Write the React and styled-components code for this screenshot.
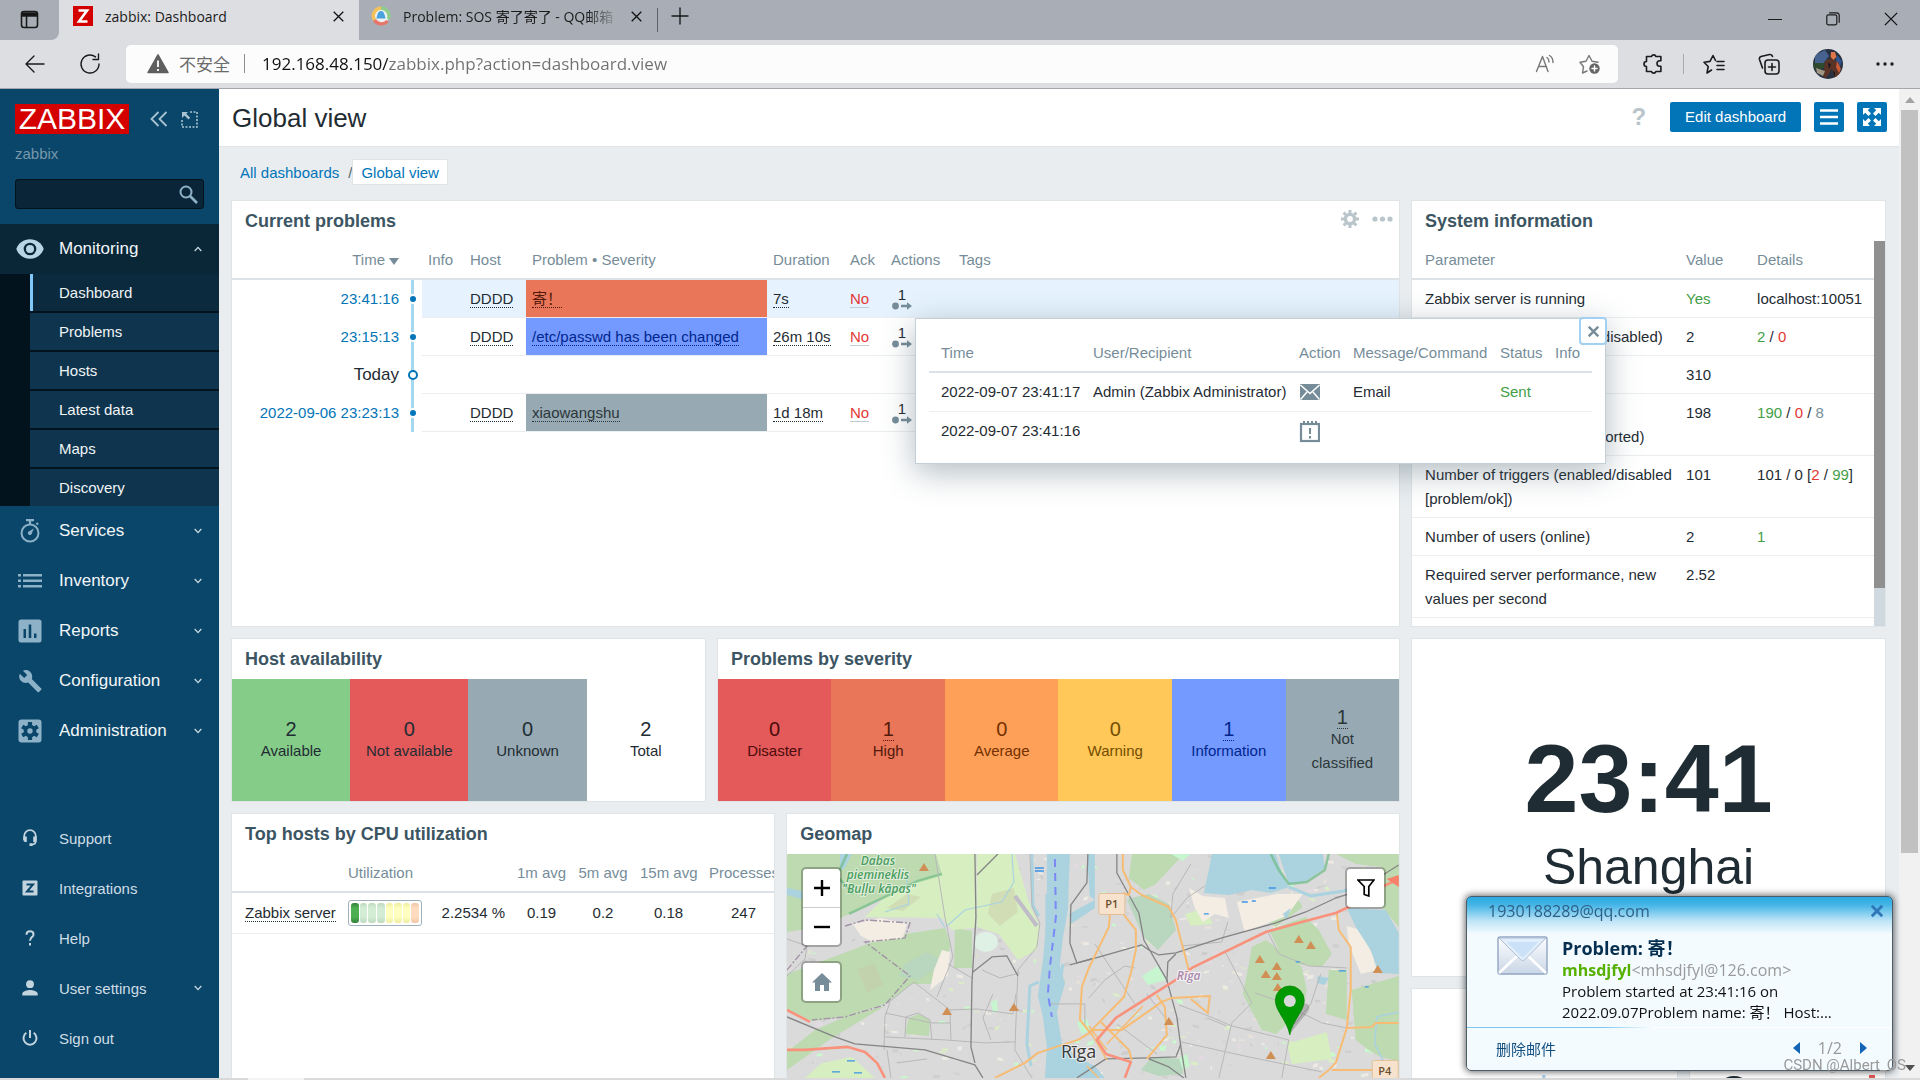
import React from "react";
import styled, { createGlobalStyle, css } from "styled-components";

const sans = '"Liberation Sans", Arial, "Noto Sans CJK SC", sans-serif';
const ui = '"Open Sans", "Noto Sans CJK SC", sans-serif';
const cjk = '"Noto Sans CJK SC", "Open Sans", sans-serif';

const GlobalStyle = createGlobalStyle`
  * { box-sizing: border-box; }
  html, body, #root { height: 100%; }
  body { margin: 0; background: #dcdcdc; font-family: ${sans}; font-size: 15px; color: #1f2c33; overflow: hidden; }
  button { font: inherit; color: inherit; background: none; border: 0; padding: 0; margin: 0; cursor: pointer; }
  a { color: inherit; text-decoration: none; }
  svg { display: block; flex: none; }
  h1, h2, h3, p, ul { margin: 0; padding: 0; }
  ul { list-style: none; }
`;

/* ---------- browser window ---------- */

const Window = styled.div`
  height: 100vh;
  display: flex;
  flex-direction: column;
`;

const TabStrip = styled.div`
  height: 40px;
  flex: none;
  display: flex;
  align-items: stretch;
  background: #a9aeb6;
  font-family: ${ui};
  font-size: 14px;
  color: #111;
`;

const TabActions = styled.button`
  width: 59px;
  padding: 10px 0 0 20px;
  display: flex;
  align-items: flex-start;
  border-bottom-right-radius: 8px;
  background: #a9aeb6;
`;

const StripStart = styled.div`
  background: #dddee2;
  display: flex;
`;

const BrowserTab = styled.div`
  display: flex;
  align-items: center;
  gap: 12px;
  width: ${(p) => (p.$active ? 300 : 298)}px;
  padding: 0 15px 8px ${(p) => (p.$active ? 14 : 12)}px;
  border-radius: 8px 8px 0 0;
  background: ${(p) => (p.$active ? "#dddee2" : "#a9aeb6")};
  height: 40px;
`;

const TabTitle = styled.span`
  flex: 1;
  min-width: 0;
  overflow: hidden;
  white-space: nowrap;
  color: #1b1b1b;
  ${(p) => p.$fade && css`mask-image: linear-gradient(90deg, #000 85%, transparent);`}
`;

const NewTab = styled.button`
  display: flex;
  align-items: center;
  padding: 0 12px 8px 13px;
`;

const StripDivider = styled.span`
  width: 1px;
  height: 24px;
  margin-top: 8px;
  background: #5f6268;
`;

const WindowButtons = styled.div`
  margin-left: auto;
  display: flex;
  gap: 44px;
  padding: 12px 22px 0 0;
  align-items: flex-start;
`;

const Toolbar = styled.div`
  height: 49px;
  flex: none;
  display: flex;
  align-items: center;
  gap: 34px;
  padding: 0 26px 1px 24px;
  background: #dddee2;
  border-bottom: 1px solid #a3a6ab;
`;

const AddressBar = styled.label`
  flex: 1;
  height: 38px;
  margin-left: -9px;
  margin-right: -10px;
  display: flex;
  align-items: center;
  gap: 10px;
  padding: 0 17px 0 21px;
  border-radius: 5px;
  background: #fcfcfd;
  font-family: ${ui};
  font-size: 17px;
`;

const Insecure = styled.span`
  color: #6b6b6b;
  font-family: ${cjk};
  font-size: 17px;
`;

const BarDivider = styled.span`
  width: 1px;
  height: 19px;
  background: #8d8d8d;
  margin: 0 7px 0 4px;
`;

const UrlInput = styled.input`
  flex: 1;
  min-width: 0;
  border: 0;
  outline: 0;
  padding: 0;
  height: 30px;
  font: inherit;
  color: transparent;
  background: linear-gradient(90deg, #111 126px, #6f6f6f 126px);
  background-clip: text;
  -webkit-background-clip: text;
`;

const AddressTools = styled.div`
  display: flex;
  gap: 23px;
  align-items: center;
`;

const BrowserTools = styled.div`
  display: flex;
  align-items: center;
  gap: 33px;
`;

const ToolDivider = styled.span`
  width: 1px;
  height: 20px;
  margin: 0 -14px;
  background: #a8a9ac;
`;

/* ---------- page frame ---------- */

const Page = styled.div`
  flex: 1;
  min-height: 0;
  display: flex;
`;

const BottomEdge = styled.div`
  height: 2px;
  flex: none;
  background: linear-gradient(90deg, #d9d9d9 248px, #f4f4f4 248px, #f4f4f4 304px, #dadada 304px);
`;

const Sidebar = styled.aside`
  width: 219px;
  flex: none;
  display: flex;
  flex-direction: column;
  background: #0a466a;
  overflow: hidden;
`;

const SideTop = styled.div`
  padding: 15px 15px 15px;
  display: flex;
  flex-direction: column;
`;

const LogoRow = styled.div`
  display: flex;
  align-items: center;
  gap: 13px;
`;

const Logo = styled.a`
  height: 30px;
  width: 114px;
  margin-right: 8px;
  display: flex;
  align-items: center;
  justify-content: center;
  background: #d40000;
  color: #fff;
  font-size: 30px;
  line-height: 30px;
`;

const ServerName = styled.div`
  margin-top: 11px;
  line-height: 18px;
  color: #7698ab;
`;

const SearchBox = styled.label`
  margin-top: 16px;
  height: 30px;
  display: flex;
  align-items: center;
  padding: 0 5px;
  border: 1px solid #04121c;
  border-radius: 3px;
  background: #0a2537;
`;

const SearchInput = styled.input`
  flex: 1;
  min-width: 0;
  border: 0;
  outline: 0;
  background: transparent;
  color: #fff;
  font: inherit;
`;

const MenuButton = styled.button`
  width: 100%;
  height: 50px;
  display: grid;
  grid-template-columns: 59px 1fr 8px;
  align-items: center;
  padding-right: 17px;
  text-align: left;
  font-size: ${(p) => (p.$small ? 15 : 17)}px;
  color: ${(p) => (p.$small ? "#cfdde5" : "#f2f6f8")};
  background: ${(p) => (p.$open ? "#0a2738" : "transparent")};
`;

const MenuIcon = styled.span`
  display: flex;
  justify-content: center;
  color: ${(p) => p.$color || "#8db2c8"};
`;

const SubMenu = styled.ul`
  display: flex;
  flex-direction: column;
  gap: 2px;
  padding-left: 30px;
  background: #03131d;
`;

const SubLink = styled.a`
  display: flex;
  align-items: center;
  height: 37px;
  padding-left: ${(p) => (p.$active ? 26 : 29)}px;
  border-left: ${(p) => (p.$active ? "3px solid #7fc8f8" : "0")};
  color: #f0f4f6;
  background: ${(p) => (p.$active ? "#0b2a3e" : "#0f344d")};
`;

const SideFooter = styled.div`
  margin-top: auto;
  padding-bottom: 15px;
`;

const Main = styled.main`
  flex: 1;
  min-width: 0;
  position: relative;
  overflow: hidden;
  background: #e9edf0;
`;

const PageHeader = styled.header`
  height: 58px;
  display: flex;
  align-items: center;
  gap: 13px;
  padding: 0 12px 2px 13px;
  background: #fff;
  border-bottom: 1px solid #dfe4e7;
`;

const Title = styled.h1`
  font-size: 26px;
  font-weight: 400;
  line-height: 30px;
  margin: 2px auto 0 0;
  color: #1f2c33;
`;

const HelpLink = styled.a`
  margin-right: 11px;
  font-size: 24px;
  font-weight: 700;
  color: #b9c5cb;
`;

const BlueButton = styled.button`
  height: 30px;
  min-width: 30px;
  padding: 0 ${(p) => (p.$icon ? 0 : 15)}px;
  display: flex;
  align-items: center;
  justify-content: center;
  border-radius: 2px;
  background: #0275b8;
  color: #fff;
`;

const Crumbs = styled.nav`
  display: flex;
  align-items: center;
  height: 26px;
  margin: 12px 0 15px 21px;
  color: #0275b8;
`;

const Slash = styled.span`
  padding-left: 9px;
  color: #4f6773;
`;

const CurrentCrumb = styled.a`
  height: 26px;
  padding: 0 8px;
  display: flex;
  align-items: center;
  background: #fff;
  border: 1px solid #dfe4e7;
  border-radius: 2px;
`;

const Grid = styled.div`
  display: grid;
  grid-template-columns: repeat(24, 1fr);
  grid-template-rows: 427px 164px 164px 164px;
  gap: 11px;
  padding: 0 13px 0 12px;
`;

const Widget = styled.section`
  grid-column: ${(p) => p.$col};
  grid-row: ${(p) => p.$row};
  min-width: 0;
  min-height: 0;
  display: flex;
  flex-direction: column;
  overflow: hidden;
  background: #fff;
  border: 1px solid #dfe4e7;
`;

const WidgetHead = styled.div`
  height: 40px;
  flex: none;
  display: flex;
  align-items: center;
  justify-content: space-between;
  padding: 0 6px 0 13px;
`;

const WidgetTitle = styled.h2`
  font-size: 18px;
  font-weight: 700;
  color: #3c5563;
`;

const WidgetTools = styled.div`
  display: flex;
  gap: 13px;
  align-items: center;
  padding-bottom: 4px;
`;

/* ---------- tables ---------- */

const Table = styled.table`
  width: ${(p) => p.$width || "100%"};
  table-layout: fixed;
  border-collapse: separate;
  border-spacing: 0;
  line-height: 24px;
  th {
    padding: 7px 6px 6px;
    height: 39px;
    text-align: left;
    font-weight: 400;
    white-space: nowrap;
    color: #768d99;
    border-bottom: 2px solid #dce2e5;
  }
  td {
    height: ${(p) => p.$rowHeight || 38}px;
    padding: 7px 6px 6px;
    vertical-align: top;
    border-bottom: 1px solid #ebeef0;
  }
  th:first-child, td:first-child { padding-left: 13px; }
`;

const Row = styled.tr`
  td { background: ${(p) => (p.$flash ? "#e6f3fe" : "transparent")}; }
`;

const TimeHead = styled.th`
  && { text-align: right; padding-right: 4px; }
`;

const SortMark = styled.span`
  display: inline-block;
  margin-left: 4px;
  border: 5px solid transparent;
  border-top: 7px solid #768d99;
  border-bottom: 0;
`;

const TimeCell = styled.td`
  && {
    background: #fff;
    border-bottom: 0;
    padding-right: 4px;
    text-align: right;
    white-space: nowrap;
    color: ${(p) => (p.$day ? "#1f2c33" : "#0275b8")};
    font-size: ${(p) => (p.$day ? 17 : 15)}px;
  }
`;

const LineCell = styled.td`
  && {
    padding: 0;
    border-bottom: 0;
    vertical-align: middle;
    background: linear-gradient(90deg, #fff 8px, #a5d8f0 8px, #a5d8f0 11px, #fff 11px);
  }
`;

const Dot = styled.span`
  display: block;
  margin: 0 auto;
  width: 10px;
  height: 10px;
  border-radius: 5px;
  ${(p) => p.$day
    ? css`border: 2px solid #0275b8; background: #fff;`
    : css`border: 2px solid #fff; background: #0275b8;`}
`;

const severityColors = {
  disaster: ["#e45959", "#4b0c0c"],
  high: ["#e97659", "#52190b"],
  average: ["#ffa059", "#733100"],
  warning: ["#ffc859", "#734d00"],
  info: ["#7499ff", "#00268e"],
  none: ["#97aab3", "#2c363a"],
  up: ["#86cc89", "#1f2c33"],
  down: ["#e45959", "#1f2c33"],
  unknown: ["#97aab3", "#1f2c33"],
  total: ["#ffffff", "#1f2c33"],
};

const ProblemCell = styled.td`
  && {
    background: ${(p) => severityColors[p.$sev][0]};
    color: ${(p) => severityColors[p.$sev][1]};
  }
`;

const Dotted = styled.a`
  border-bottom: 1px dotted currentColor;
`;

const AckLink = styled.a`
  color: #e33734;
  border-bottom: 1px solid #c3ccd2;
`;

const ActionsButton = styled.button`
  display: flex;
  flex-direction: column;
  align-items: center;
  width: 22px;
  line-height: 15px;
`;

const Tint = styled.span`
  color: ${(p) => p.$c};
`;

const ScrollArea = styled.div`
  flex: 1;
  min-height: 0;
  display: flex;
  overflow: hidden;
`;

const InnerTrack = styled.div`
  width: 11px;
  flex: none;
  background: #d0d9e0;
`;

const InnerThumb = styled.div`
  height: 90%;
  background: #909090;
`;

const ScrollContent = styled.div`
  flex: 1;
  min-width: 0;
`;

/* ---------- tiles ---------- */

const Tiles = styled.div`
  flex: 1;
  display: grid;
  grid-auto-flow: column;
  grid-auto-columns: minmax(0, 1fr);
`;

const Tile = styled.div`
  display: flex;
  flex-direction: column;
  align-items: center;
  justify-content: center;
  padding: 2px 20px 0;
  text-align: center;
  background: ${(p) => severityColors[p.$tone][0]};
  color: ${(p) => severityColors[p.$tone][1]};
`;

const TileCount = styled.span`
  font-size: 20px;
  line-height: 20px;
`;

const TileLabel = styled.span`
  line-height: 24px;
  ${(p) => !p.$wrap && css`white-space: nowrap;`}
`;

/* ---------- top hosts ---------- */

const HostsTable = styled(Table)`
  th, td { text-align: center; }
  th:nth-child(2), td:first-child, td:nth-child(2) { text-align: left; }
  td:nth-child(3) { text-align: right; }
  td { vertical-align: middle; padding-top: 6px; }
`;

const Gauge = styled.div`
  display: flex;
  gap: 1px;
  width: 74px;
  height: 26px;
  padding: 2px;
  border: 1px solid #9fb0ba;
  border-radius: 3px;
`;

const GaugeBar = styled.span`
  flex: 1;
  border-radius: 3px;
  background: linear-gradient(180deg, ${(p) => p.$c[1]}, ${(p) => p.$c[0]} 25%, ${(p) => p.$c[0]} 70%, ${(p) => p.$c[1]});
`;

/* ---------- geomap ---------- */

const MapArea = styled.div`
  position: relative;
  flex: 1;
  background: #d9d9d9;
  svg.tiles { width: 100%; height: auto; }
`;

const MapControl = styled.div`
  position: absolute;
  top: ${(p) => p.$top}px;
  ${(p) => (p.$right ? "right: 13px;" : "left: 14px;")}
  border: 2px solid rgba(0, 0, 0, 0.25);
  border-radius: 5px;
  background-clip: padding-box;
  background-color: #fff;
`;

const MapButton = styled.button`
  width: 37px;
  height: 38px;
  display: flex;
  align-items: center;
  justify-content: center;
  & + & { border-top: 1px solid #ccc; }
`;

/* ---------- clock ---------- */

const Clock = styled.div`
  flex: 1;
  display: flex;
  flex-direction: column;
  align-items: center;
  justify-content: flex-end;
  padding-bottom: 76px;
  color: #1f2c33;
`;

const ClockTime = styled.div`
  font-size: 97px;
  line-height: 110px;
  font-weight: 700;
`;

const ClockZone = styled.div`
  font-size: 50px;
  line-height: 66px;
`;

const PeekArea = styled.div`
  display: flex;
  justify-content: ${(p) => p.$align || "center"};
  padding: 86px 10px 0;
`;

/* ---------- popups ---------- */

const ActionsPopup = styled.div`
  position: absolute;
  left: 696px;
  top: 229px;
  width: 691px;
  padding: 15px 13px 12px;
  background: #fff;
  border: 1px solid #c3d0d8;
  box-shadow: 0 8px 30px rgba(60, 85, 99, 0.4);
`;

const PopupClose = styled.button`
  position: absolute;
  top: -2px;
  right: -2px;
  width: 28px;
  height: 28px;
  display: flex;
  align-items: center;
  justify-content: center;
  background: #fff;
  border: 2px solid #a2d0f3;
  border-radius: 4px;
`;

const PopupTable = styled(Table)`
  tr:last-child td { border-bottom: 0; }
  th:first-child, td:first-child { padding-left: 12px; }
  td { white-space: nowrap; height: 39px; }
`;

const Scrollbar = styled.div`
  width: 21px;
  flex: none;
  display: flex;
  flex-direction: column;
  align-items: center;
  background: #f1f1f1;
`;

const ScrollArrow = styled.button`
  height: 21px;
  width: 100%;
  display: flex;
  align-items: center;
  justify-content: center;
  flex: none;
`;

const ScrollThumb = styled.div`
  width: 17px;
  flex: 743;
  background: #c1c1c1;
`;

const ScrollRest = styled.div`
  flex: 204;
`;

const Toast = styled.div`
  position: fixed;
  right: 27px;
  bottom: 9px;
  width: 427px;
  height: 175px;
  display: flex;
  flex-direction: column;
  font-family: ${ui};
  border: 1px solid #4c5d68;
  border-radius: 5px;
  background: linear-gradient(180deg, #29abe2 0, #45b5e6 8px, #bfe5f7 24px, #f3fbff 37px);
  box-shadow: 0 0 7px 1px rgba(0, 0, 0, 0.6);
`;

const ToastHead = styled.div`
  height: 30px;
  display: flex;
  align-items: center;
  justify-content: space-between;
  padding: 0 9px 3px 21px;
  color: #2c5f86;
  font-size: 16px;
`;

const ToastBody = styled.div`
  flex: 1;
  display: flex;
  gap: 14px;
  padding: 9px 20px 0 30px;
`;

const ToastText = styled.div`
  flex: 1;
  font-size: 15px;
  line-height: 21px;
  color: #111;
  white-space: nowrap;
`;

const ToastSubject = styled.h3`
  font-size: 18px;
  line-height: 24px;
  color: #062f4f;
`;

const Sender = styled.p`
  font-size: 16px;
  color: #9a9a9a;
  b { color: #55b000; }
`;

const ToastRule = styled.div`
  height: 1px;
  background: linear-gradient(90deg, #7cc6f0 0, #7cc6f0 32%, #fff 44%);
`;

const ToastFoot = styled.div`
  height: 42px;
  display: flex;
  align-items: center;
  padding: 0 25px 2px 29px;
  gap: 18px;
  color: #999;
  font-size: 16px;
`;

const DeleteMail = styled.button`
  margin-right: auto;
  font-family: ${cjk};
  font-size: 15px;
  color: #14507f;
`;

const Watermark = styled.div`
  position: fixed;
  right: 14px;
  bottom: 5px;
  font-size: 15px;
  line-height: 20px;
  font-family: Roboto, sans-serif;
  color: #9a9a9a;
`;

/* ---------- icons ---------- */

const Cross = ({ size = 11, color = "#111", w = 1.3 }) => (
  <svg width={size} height={size} viewBox="0 0 11 11" stroke={color} strokeWidth={w} fill="none">
    <path d="M.7.7l9.6 9.6M10.3.7L.7 10.3" />
  </svg>
);

const line = { fill: "none", stroke: "#1b1b1b", strokeWidth: 1.4, strokeLinecap: "round", strokeLinejoin: "round" };

const Chevron = ({ up }) => (
  <svg width="8" height="6" viewBox="0 0 8 6" fill="none" stroke="#c9d9e2" strokeWidth="1.3">
    <path d={up ? "M.7 5L4 1.4 7.3 5" : "M.7 1L4 4.6 7.3 1"} />
  </svg>
);

const icons = {
  eye: (
    <svg width="28" height="20" viewBox="0 0 28 20">
      <path fill="currentColor" d="M14 .3C7.600.300 2.300 4.200.3 10c2 5.800 7.300 9.700 13.700 9.700S25.700 15.800 27.700 10C25.700 4.200 20.400.3 14 .3z" />
      <circle cx="14" cy="10" r="6.300" fill="#0a2738" />
      <circle cx="14" cy="10" r="4" fill="currentColor" />
    </svg>
  ),
  timer: (
    <svg width="20" height="24" viewBox="0 0 20 24" fill="none" stroke="currentColor">
      <circle cx="10" cy="14" r="8.500" strokeWidth="2" />
      <path d="M6 1.200h8M10 1v4M16.500 5.500l1.500-1.500" strokeWidth="2.200" />
      <path d="M13.800 9.500l-2 5a2 2 0 1 1-2.600-2.300z" fill="currentColor" stroke="none" />
    </svg>
  ),
  list: (
    <svg width="24" height="16" viewBox="0 0 24 16" fill="currentColor">
      <path d="M0 1h3v2.500H0zM5 1h19v2.500H5zM0 6.500h3V9H0zM5 6.500h19V9H5zM0 12h3v2.500H0zM5 12h19v2.500H5z" />
    </svg>
  ),
  reports: (
    <svg width="24" height="24" viewBox="0 0 24 24">
      <rect x=".5" y=".5" width="23" height="23" rx="2.500" fill="currentColor" />
      <path fill="#0a466a" d="M5.500 10H8v9H5.500zM10.700 5.500h2.600V19h-2.600zM16 14.500h2.500V19H16z" />
    </svg>
  ),
  wrench: (
    <svg width="24" height="24" viewBox="0 0 24 24" fill="currentColor">
      <path d="M23.200 19.500l-9.400-9.400c.9-2.400.4-5.200-1.500-7.100C10.300 1 7.300.6 4.900 1.700l4.300 4.300-3 3-4.400-4.300C.600 7.100 1.100 10.100 3.100 12.100c1.900 1.900 4.700 2.400 7.100 1.500l9.400 9.400c.4.4 1 .4 1.400 0l2.200-2.300c.500-.3.500-1 0-1.200z" />
    </svg>
  ),
  admin: (
    <svg width="24" height="24" viewBox="0 0 24 24">
      <rect x=".5" y=".5" width="23" height="23" rx="3" fill="currentColor" />
      <circle cx="12" cy="12" r="6.300" fill="#0a466a" />
      <path d="M12 3v18M4.200 7.500l15.600 9M19.800 7.500l-15.600 9" stroke="#0a466a" strokeWidth="4.200" />
      <circle cx="12" cy="12" r="2.700" fill="currentColor" />
    </svg>
  ),
  support: (
    <svg width="16" height="18" viewBox="0 0 16 18" fill="none" stroke="currentColor" strokeWidth="1.800">
      <path d="M2.200 11V7a5.800 5.800 0 0 1 11.600 0v5c0 2.200-1.300 3.400-4 3.600" />
      <path d="M1.400 7.500h3.400V13H3.400a2 2 0 0 1-2-2zM14.600 7.500h-3.400V13h1.400a2 2 0 0 0 2-2zM7.500 14.300h3V17h-3z" fill="currentColor" stroke="none" />
    </svg>
  ),
  zed: (
    <svg width="16" height="16" viewBox="0 0 16 16">
      <rect x=".5" y=".5" width="15" height="15" rx="1" fill="currentColor" />
      <path d="M4.500 4.500h6.500l-6 7h6.500" fill="none" stroke="#0a466a" strokeWidth="2" />
    </svg>
  ),
  help: (
    <svg width="10" height="16" viewBox="0 0 10 16" fill="none" stroke="currentColor" strokeWidth="2">
      <path d="M1.500 4.700C1.500 2.500 3 1.300 5 1.300s3.500 1.200 3.500 3.100C8.500 7 5 7.300 5 10.800M5 13v2.400" />
    </svg>
  ),
  user: (
    <svg width="16" height="16" viewBox="0 0 16 16" fill="currentColor">
      <circle cx="8" cy="4.200" r="3.900" />
      <path d="M.3 15.500v-1.700C.3 11.200 5.400 10 8 10s7.700 1.200 7.700 3.800v1.700z" />
    </svg>
  ),
  power: (
    <svg width="16" height="16" viewBox="0 0 16 16" fill="none" stroke="currentColor" strokeWidth="2">
      <path d="M8 0v8M4.300 2.800a6.500 6.500 0 1 0 7.400 0" />
    </svg>
  ),
};

const Favicon = () => (
  <svg width="20" height="20" viewBox="0 0 20 20">
    <rect width="20" height="20" fill="#d40000" />
    <path d="M5.500 4.500h8.500L6 15.500h8.500" fill="none" stroke="#fff" strokeWidth="2.600" />
  </svg>
);

const MailFavicon = () => (
  <svg width="20" height="20" viewBox="0 0 20 20" fill="none" strokeWidth="3.400">
    <circle cx="10" cy="10" r="8" fill="#eef2f4" />
    <path d="M10 2a8 8 0 0 0-6.500 12" stroke="#f5c25a" />
    <path d="M10 2a8 8 0 0 1 7.400 11" stroke="#8fce8a" />
    <path d="M3.500 14a8 8 0 0 0 13 1" stroke="#e4776a" />
    <path d="M10 5c3 0 3.600 3.500 4.600 7.500H5.400C6.400 8.500 7 5 10 5z" fill="#4aa3dd" />
  </svg>
);

/* ---------- data ---------- */

const subItems = ["Dashboard", "Problems", "Hosts", "Latest data", "Maps", "Discovery"];

const sections = [
  ["timer", "Services"],
  ["list", "Inventory"],
  ["reports", "Reports"],
  ["wrench", "Configuration"],
  ["admin", "Administration"],
];

const footerItems = [
  ["support", "Support"],
  ["zed", "Integrations"],
  ["help", "Help"],
  ["user", "User settings", true],
  ["power", "Sign out"],
];

const problems = [
  { time: "23:41:16", sev: "high", name: "寄！", duration: "7s", flash: true },
  { time: "23:15:13", sev: "info", name: "/etc/passwd has been changed", duration: "26m 10s" },
  { day: "Today" },
  { time: "2022-09-06 23:23:13", sev: "none", name: "xiaowangshu", duration: "1d 18m" },
];

const G = "#429e47";
const R = "#e33734";

const sysInfo = [
  ["Zabbix server is running", <Tint $c={G}>Yes</Tint>, "localhost:10051"],
  ["Number of hosts (enabled/disabled)", "2", <><Tint $c={G}>2</Tint> / <Tint $c={R}>0</Tint></>],
  ["Number of templates", "310", ""],
  ["Number of items (enabled/disabled/not supported)", "198", <><Tint $c={G}>190</Tint> / <Tint $c={R}>0</Tint> / <Tint $c="#768d99">8</Tint></>],
  ["Number of triggers (enabled/disabled [problem/ok])", "101", <>101 / 0 [<Tint $c={R}>2</Tint> / <Tint $c={G}>99</Tint>]</>],
  ["Number of users (online)", "2", <Tint $c={G}>1</Tint>],
  ["Required server performance, new values per second", "2.52", ""],
  ["", "", ""],
];

const hostTiles = [
  ["up", 2, "Available"],
  ["down", 0, "Not available"],
  ["unknown", 0, "Unknown"],
  ["total", 2, "Total"],
];

const severityTiles = [
  ["disaster", 0, "Disaster"],
  ["high", 1, "High"],
  ["average", 0, "Average"],
  ["warning", 0, "Warning"],
  ["info", 1, "Information"],
  ["none", 1, "Not classified"],
];

const gaugeColors = [
  ["#4caf50", "#35803a"],
  ["#d3ecd4", "#bcd9be"], ["#d3ecd4", "#bcd9be"], ["#d3ecd4", "#bcd9be"],
  ["#ffffbf", "#ecec9f"], ["#ffffbf", "#ecec9f"], ["#ffffbf", "#ecec9f"],
  ["#ffdcbf", "#efc6a6"],
];

/* ---------- map drawing ---------- */

function patches() {
  let s = 7;
  const rnd = () => {
    s = (s * 16807) % 2147483647;
    return s / 2147483647;
  };
  const tones = ["#eeebe4", "#e6e2da", "#dcebc8", "#c8facc", "#e2dae0", "#d0d0d0", "#cdcdcd", "#eeebe4", "#d3d3d3"];
  const out = [];
  for (let i = 0; i < 560; i++) {
    const x = rnd() * 612;
    const y = rnd() * 230;
    const a = 1.5 + rnd() * 6;
    const b = 1 + rnd() * 3;
    const k = rnd() * 3 - 1.5;
    out.push({ d: `M${x} ${y}l${a} ${k}l${k} ${b}l${-a} ${-k}z`, c: tones[Math.floor(rnd() * tones.length)] });
  }
  return out;
}
const cityPatches = patches();

const peaks = [[137, 13], [160, 157], [227, 153], [512, 85], [524, 91], [473, 105], [490, 112], [479, 120], [490, 122], [491, 133], [591, 115], [382, 167], [484, 201]];

const MapDrawing = () => (
  <svg className="tiles" viewBox="0 0 612 224" fontFamily='"Open Sans", sans-serif'>
    <rect width="612" height="224" fill="#dadada" />
    {cityPatches.map((p, i) => <path key={i} d={p.d} fill={p.c} />)}
    <g fill="#bddab1">
      <path d="M0 0H149L155 20 131 27 98 43 62 60 35 73 0 78z" />
      <path d="M98 83L158 74 164 90 155 124 145 130 125 130 98 150 58 163 25 167 0 155V120L65 96z" />
      <path d="M168 74L185 77 185 114 167 114z" />
      <path d="M0 198L28 176 58 163 98 152 45 184 0 216z" />
      <path d="M118 180L122 164 132 160 143 166 142 182z" />
      <path d="M345 0H397L369 30 357 36 342 24z" />
      <path d="M482 76L519 63 532 76 545 100 535 113 509 110 492 96z" />
      <path d="M465 93L479 86 515 113 520 136 516 156 489 180 475 176 456 140 462 110z" />
      <path d="M475 63L508 40 516 53 489 73z" />
      <path d="M542 116L560 116 560 166 539 160z" />
      <path d="M565 136L612 122V208L592 202 582 196 569 186z" />
      <path d="M549 0H612V73L595 53 595 13 569 10z" />
    </g>
    <g fill="#b9d6bf">
      <path d="M340 45L362 40 382 50 389 76 371 96 356 82z" />
      <path d="M118 110L140 98 158 108 132 126 112 122z" />
      <path d="M354 216L365 203 396 205 396 220 372 222z" />
    </g>
    <g fill="#d7eec0">
      <path d="M149 0H189L188 74 165 76 155 64 78 63 98 43 131 27 155 20z" />
      <path d="M190 0H228L243 52 253 73 250 96 231 106 212 80 190 73z" />
      <path d="M18 224L35 209 65 203 88 224z" />
      <path d="M500 190L540 178 545 205 505 210z" />
      <path d="M398 60L418 54 426 70 404 72z" />
    </g>
    <g fill="#c9c9a8" opacity=".45">
      <path d="M205 40l22-6 4 24-18 14-12-12z" />
      <path d="M70 115l18-6 8 22-16 8z" />
      <path d="M100 54l20-14 14 3-18 14z" />
    </g>
    <g fill="#f3ede4">
      <path d="M66 70l28-6 26 6-4 14-30 4-12-6z" />
      <path d="M155 96l8 2-2 24-18 14 4-20z" />
      <path d="M450 48l40-8 26 0-16 22-42 16z" />
      <path d="M402 34l14 8 22 2 4 20-14-4-12 8-8-14z" />
      <path d="M560 72l14 4 12 26 4 14-16 4-12-30z" />
    </g>
    <ellipse cx="199" cy="88" rx="12" ry="10" fill="#dff1e4" />
    <g fill="#c6f5cf">
      <path d="M355 122l16-10 8 14-18 5zM204 148l6-3 1 12-5 2zM392 204l8-4 3 12-7 4zM290 168l10-3 4 10-9 6zM384 0h20l-8 7z" />
    </g>
    <g fill="#aad3df">
      <path d="M260 0H283L281 56 276 84 273 110 278 130 270 158 275 190 290 203 308 212 318 224H258L260 193 256 163 251 142 256 106 260 63z" />
      <path d="M282 60L308 46 308 54 284 70zM300 0h8v46l-5-4z" />
      <path d="M425 0H489L494 16 502 33 484 39 465 36 442 41 417 39 422 16z" />
      <path d="M492 0H536L538 14 518 28 502 30z" />
      <path d="M560 54L599 56 612 79V120L592 119 584 96 569 73z" />
      <path d="M53 0h12l-8 15h-4zM0 34l15 3v8L0 41zM496 60l8-6-4 12zM531 122l11 2-4 7-8-2z" />
    </g>
    <g fill="none" stroke="#aad3df" strokeWidth="3">
      <path d="M245 0L246 52 252 62M252 128L243 132 240 190 244 212M502 33L524 42 557 37 570 32" />
      <path d="M260 40V150M276 110l-4 28" />
      <path d="M225 0L227 28 215 48 178 56 160 72M120 25L122 50 98 58M150 60l8 14" strokeWidth="1.200" />
      <path d="M612 158L590 163 588 190 596 206 612 216" strokeWidth="1.500" />
    </g>
    <path d="M484 0L492 16 502 30 520 28 538 16 542 0M60 0L50 22 66 40M155 20L131 27 98 43 62 60" fill="none" stroke="#6dba83" strokeWidth="2.500" opacity=".7" />
    <path d="M228 42L250 72" stroke="#c0bcc8" strokeWidth="4" />
    <g fill="none" stroke="#b8b8b8" strokeWidth="1" strokeLinejoin="round">
      <path d="M148 0L158 63 166 103 161 116 150 143M101 149L127 128 163 156 164 186M97 196L98 163 103 148M98 159L145 169 164 169M98 183L158 186 198 189 228 188" />
      <path d="M161 110L185 124M243 0L245 52 253 69 250 93 231 116 228 196 245 224M118 183L119 163 131 159 143 166 145 186M163 156L190 155 226 160 229 140" />
      <path d="M439 99L465 149 445 169 432 224M392 151L419 161 445 172 502 186 495 224M394 188L462 203 535 218M468 139L489 146 535 169 560 174" />
      <path d="M0 85L20 92 18 105 0 122M195 116l18 8 20-5M206 140l-10 24 8 22M404 10l-18 30-2 24M384 64l16-20 18-12M395 92l40-4 6-20M480 76l12 24 30 12 38 2M262 150h36v22M100 196l4 28M110 209l30-4" />
      <path d="M302 144l16-18 20-14 10 2M308 90l40 60M360 140l20 26M330 170l40 30M440 172l-20-8M534 120l-10 30-16 20" />
    </g>
    <path d="M58 72L78 66 123 69 118 84 78 88 123 122 98 151 58 163 25 166M0 116l20-24" fill="none" stroke="#a393a6" strokeWidth="1.400" strokeDasharray="7 2 2 2" />
    <g fill="none" stroke="#848484" strokeWidth="1.300" strokeLinejoin="round">
      <path d="M330 0L330 19 352 59 357 86 380 126 390 163 394 193 399 224M283 111L302 106 355 91 362 96 372 101 389 99 435 84 489 69 519 58 549 44 569 38 612 11" />
      <path d="M389 100L381 108 380 128M0 163L48 183 68 190 138 196 188 211 196 224M188 0L189 63 185 129 184 193 188 209M211 0L190 21M186 118L205 103 220 102 231 122" />
      <path d="M301 0L300 29 284 51 283 89 290 109 308 104M290 224L319 205 362 204 389 203 394 190M362 205L382 213 397 224" />
    </g>
    <g fill="none" stroke="#f7bc74" strokeWidth="2" strokeLinejoin="round">
      <path d="M336 0L336 16 344 33 355 41 382 53 389 66 394 86 402 116M344 33l-2 8-6-2M323 61L322 73 302 114 295 133 293 166 306 182" />
      <path d="M337 61L349 76 349 96 344 119 337 143 302 179M208 224L238 209 251 199 291 186 308 176 335 176 375 148 385 144 423 142 421 159 404 145" />
      <path d="M370 141L378 153 380 181 360 205M314 168L342 196 345 206M550 59L552 76 564 93 564 136 560 174 549 209 542 216 532 224M560 174L585 173 589 169 612 169M545 216H586" />
      <path d="M302 172l18 24M320 190l36-38M306 182l14 24M300 212l12 12" strokeWidth="1.500" />
    </g>
    <g fill="none" stroke="#f8927d" strokeWidth="2.600" strokeLinejoin="round">
      <path d="M338 224L344 208 319 200 310 186 329 164 389 126 405 114 479 78 515 68 549 59 562 53 595 33 612 25" />
      <path d="M0 156L23 168M0 196H18L61 193 78 198 90 209 98 224" />
    </g>
    <path d="M600 25l12-4v12z" fill="#f8806a" />
    <path d="M268 5L269 63 263 113 261 140 265 163" fill="none" stroke="#7c88f5" strokeWidth="2" strokeDasharray="8 6" />
    <path d="M248 14h9M248 17h9M60 207h8M67 219h8M45 218h8M482 34h7M455 48h6M417 60h5M509 108h4M552 117h7M578 133h4M465 47h4" stroke="#3d94e8" strokeWidth="1.300" />
    {peaks.map(([x, y]) => <path key={`${x}-${y}`} d={`M${x} ${y - 4}l5 8h-10z`} fill="#d08f55" />)}
    <g fontStyle="italic" fontWeight="600" fontSize="12" fill="#4a9e60" textAnchor="middle" stroke="#ffffff" strokeOpacity=".5" strokeWidth="2" paintOrder="stroke">
      <text x="91" y="11">Dabas</text>
      <text x="91" y="25">piemineklis</text>
      <text x="92" y="39">"Buļļu kāpas"</text>
    </g>
    <text x="274" y="204" fontSize="18" fill="#3a3a3a" stroke="#fff" strokeOpacity=".6" strokeWidth="2" paintOrder="stroke">Rīga</text>
    <text x="390" y="126" fontSize="12" fontStyle="italic" fontWeight="600" fill="#a889ad" stroke="#fff" strokeOpacity=".7" strokeWidth="2" paintOrder="stroke">Rīga</text>
    <g fontSize="11" fontWeight="600" fill="#6b4d2d" textAnchor="middle">
      <rect x="312" y="39.500" width="26" height="21" rx="2" fill="#f7e3cd" stroke="#e2bf98" />
      <text x="325" y="54">P1</text>
      <rect x="585.500" y="206.500" width="26" height="21" rx="2" fill="#f7e3cd" stroke="#e2bf98" />
      <text x="598" y="221">P4</text>
    </g>
    <path d="M503 180l18-22c4-6 0-10-6-8z" fill="#000" opacity=".18" />
    <path d="M503 181C500 166 488.500 157 488.500 146.500a14.500 14.500 0 0 1 29 0C517.500 157 506 166 503 181z" fill="#009900" stroke="#007d00" strokeWidth=".6" />
    <circle cx="503" cy="147" r="6" fill="#d9d9d9" />
  </svg>
);

/* ---------- sections ---------- */

const Browser = () => (
  <>
    <TabStrip>
      <StripStart>
        <TabActions aria-label="Tab actions">
          <svg width="20" height="20" viewBox="0 0 20 20" {...line} strokeWidth="1.600">
            <rect x="1.500" y="1.500" width="16" height="16" rx="2.500" />
            <path d="M2 3h15v3H2z" fill="#111" />
            <path d="M6.500 6v11" />
          </svg>
        </TabActions>
        <BrowserTab $active>
          <Favicon />
          <TabTitle>zabbix: Dashboard</TabTitle>
          <button aria-label="Close tab"><Cross /></button>
        </BrowserTab>
      </StripStart>
      <BrowserTab>
        <MailFavicon />
        <TabTitle $fade>Problem: SOS 寄了寄了 - QQ邮箱</TabTitle>
        <button aria-label="Close tab"><Cross /></button>
      </BrowserTab>
      <StripDivider />
      <NewTab aria-label="New tab">
        <svg width="18" height="18" viewBox="0 0 18 18" {...line}><path d="M9 1v16M1 9h16" /></svg>
      </NewTab>
      <WindowButtons>
        <button aria-label="Minimize"><svg width="14" height="14" {...line} strokeWidth="1.200"><path d="M.5 7.500h13" /></svg></button>
        <button aria-label="Restore">
          <svg width="14" height="14" viewBox="0 0 14 14" {...line} strokeWidth="1.200">
            <rect x=".8" y="2.800" width="10" height="10" rx="1.500" />
            <path d="M3.500.8h7.200a2.500 2.500 0 0 1 2.500 2.500v7" />
          </svg>
        </button>
        <button aria-label="Close"><Cross size={14} w={1} /></button>
      </WindowButtons>
    </TabStrip>
    <Toolbar>
      <button aria-label="Back"><svg width="21" height="20" viewBox="0 0 21 20" {...line}><path d="M20 10H2M10 2l-8 8 8 8" /></svg></button>
      <button aria-label="Reload">
        <svg width="22" height="22" viewBox="0 0 22 22" {...line}><path d="M20 11a9 9 0 1 1-3.500-7.100M19.500 1v5.500H14" /></svg>
      </button>
      <AddressBar>
        <svg width="22" height="20" viewBox="0 0 22 20">
          <path d="M11 .8L21 18.500H1z" fill="#5f5f5f" stroke="#5f5f5f" strokeWidth="1.500" strokeLinejoin="round" />
          <path d="M11 6.500v6.500M11 15v2" stroke="#fff" strokeWidth="1.800" />
        </svg>
        <Insecure>不安全</Insecure>
        <BarDivider />
        <UrlInput aria-label="Address" defaultValue="192.168.48.150/zabbix.php?action=dashboard.view" />
        <AddressTools>
          <svg width="21" height="20" viewBox="0 0 21 20" {...line} stroke="#777"><path d="M1.500 17.500L7.500 2.500 13 17.500M3.500 12.500h8M12 3.500c1.500 1 2 2.500 2 4.500M14.500 1.500c2.500 1.500 3.500 4 3.500 7" /></svg>
          <svg width="22" height="22" viewBox="0 0 22 22" {...line} stroke="#777">
            <path d="M8 18l-4.500 2 1-6.300L1 9.300l6-1L10 2.500l3 5.800 6 1" />
            <circle cx="15.500" cy="15.500" r="5.200" fill="#666" stroke="none" />
            <path d="M15.500 13v5M13 15.500h5" stroke="#fff" />
          </svg>
        </AddressTools>
      </AddressBar>
      <BrowserTools>
        <button aria-label="Extensions">
          <svg width="22" height="22" viewBox="0 0 22 22" {...line} strokeWidth="1.600"><path d="M6.500 3.500h3a2.300 2.300 0 0 1 4.400 0h5v4.300h-1.200a2.700 2.700 0 0 0 0 5.400h1.200v5.300h-5a2.300 2.300 0 0 1-4.400 0h-5v-5a2.500 2.500 0 0 1 0-5V3.500z" /></svg>
        </button>
        <ToolDivider />
        <button aria-label="Favorites">
          <svg width="22" height="22" viewBox="0 0 22 22" {...line} strokeWidth="1.600"><path d="M8.500 17L4 20l1.200-6.500L1 9.200l6-.8L10 2.500l2.500 5M14 8.500h7M14 12.500h7M14 16.500h7" /></svg>
        </button>
        <button aria-label="Collections">
          <svg width="22" height="22" viewBox="0 0 22 22" {...line} strokeWidth="1.600"><path d="M4.500 15L1.500 6.500a2.500 2.500 0 0 1 1.500-3l8.500-2a2.500 2.500 0 0 1 3 2" /><rect x="7" y="7" width="14" height="14" rx="3" /><path d="M14 10.500v7M10.500 14h7" /></svg>
        </button>
        <button aria-label="Profile">
          <svg width="30" height="30" viewBox="0 0 30 30">
            <defs><clipPath id="face"><circle cx="15" cy="15" r="15" /></clipPath></defs>
            <g clipPath="url(#face)">
              <rect width="30" height="30" fill="#27313f" />
              <path d="M2 6l10-5 4 6-6 8-8-1z" fill="#46628f" />
              <path d="M24 6l5 6-3 8-4-4z" fill="#2f5591" />
              <path d="M0 14l12 0-1 5-9 2z" fill="#2d4a2f" />
              <path d="M12 12l6-3 8 5 2 14-6 2-3-10-6 9-3-2z" fill="#5a3327" />
              <path d="M18 3l4 0 1.500 5-3 3-3-3z" fill="#e0774a" />
              <path d="M24 12l4 8-2 4-3-6z" fill="#c85c36" />
              <path d="M3 19l9 3-2 5-6-3z" fill="#9f9684" />
              <path d="M15 14l3 1-2 5zM20 22l2 1 0 5z" fill="#16191f" />
            </g>
          </svg>
        </button>
        <button aria-label="Settings and more"><svg width="18" height="4" viewBox="0 0 18 4" fill="#1b1b1b"><circle cx="2" cy="2" r="1.700" /><circle cx="9" cy="2" r="1.700" /><circle cx="16" cy="2" r="1.700" /></svg></button>
      </BrowserTools>
    </Toolbar>
  </>
);

const Side = () => (
  <Sidebar>
    <SideTop>
      <LogoRow>
        <Logo href="#home">ZABBIX</Logo>
        <button aria-label="Collapse sidebar"><svg width="18" height="16" viewBox="0 0 18 16" fill="none" stroke="#a9c3d2" strokeWidth="1.800"><path d="M8.500 1l-7 7 7 7M16.500 1l-7 7 7 7" /></svg></button>
        <button aria-label="Hide sidebar">
          <svg width="17" height="17" viewBox="0 0 17 17" fill="none" stroke="#a9c3d2">
            <path d="M9 1h7v15H1V9" strokeWidth="1.600" strokeDasharray="2 1.500" />
            <path d="M1 1h6L5.200 2.800l4 4-1.700 1.700-4-4L1 7z" fill="#a9c3d2" stroke="none" />
          </svg>
        </button>
      </LogoRow>
      <ServerName>zabbix</ServerName>
      <SearchBox>
        <SearchInput aria-label="Search" />
        <svg width="19" height="19" viewBox="0 0 19 19" fill="none" stroke="#8db2c8" strokeWidth="2"><circle cx="7" cy="7" r="5.500" /><path d="M11 11l7 7" strokeWidth="2.600" /></svg>
      </SearchBox>
    </SideTop>
    <nav>
      <MenuButton $open>
        <MenuIcon $color="#b8d5e6">{icons.eye}</MenuIcon><span>Monitoring</span><Chevron up />
      </MenuButton>
      <SubMenu>
        {subItems.map((t, i) => <li key={t}><SubLink href="#sub" $active={i === 0}>{t}</SubLink></li>)}
      </SubMenu>
      {sections.map(([icon, label]) => (
        <MenuButton key={label}><MenuIcon>{icons[icon]}</MenuIcon><span>{label}</span><Chevron /></MenuButton>
      ))}
    </nav>
    <SideFooter>
      {footerItems.map(([icon, label, more]) => (
        <MenuButton key={label} $small>
          <MenuIcon $color="#c3d4de">{icons[icon]}</MenuIcon><span>{label}</span>{more && <Chevron />}
        </MenuButton>
      ))}
    </SideFooter>
  </Sidebar>
);

const Cols = ({ widths }) => (
  <colgroup>{widths.map((w, i) => <col key={i} style={w ? { width: w } : undefined} />)}</colgroup>
);

const Problems = () => (
  <Widget $col="1 / span 17" $row="1">
    <WidgetHead>
      <WidgetTitle>Current problems</WidgetTitle>
      <WidgetTools>
        <button aria-label="Edit">
          <svg width="18" height="18" viewBox="0 0 18 18" fill="none" stroke="#b9c5cb">
            <circle cx="9" cy="9" r="4.600" strokeWidth="3.400" />
            <path d="M9 0v3M9 15v3M0 9h3M15 9h3M2.600 2.600l2.200 2.200M13.200 13.200l2.200 2.200M15.400 2.600l-2.200 2.200M4.800 13.200l-2.200 2.200" strokeWidth="3" />
          </svg>
        </button>
        <button aria-label="More"><svg width="21" height="6" viewBox="0 0 21 6" fill="#b9c5cb"><circle cx="3" cy="3" r="2.600" /><circle cx="10.500" cy="3" r="2.600" /><circle cx="18" cy="3" r="2.600" /></svg></button>
      </WidgetTools>
    </WidgetHead>
    <Table>
      <Cols widths={[171, 19, 42, 62, 241, 77, 41, 68, 0]} />
      <thead>
        <tr>
          <TimeHead>Time<SortMark /></TimeHead><th /><th>Info</th><th>Host</th><th>Problem • Severity</th>
          <th>Duration</th><th>Ack</th><th>Actions</th><th>Tags</th>
        </tr>
      </thead>
      <tbody>
        {problems.map((p) => p.day ? (
          <Row key="day"><TimeCell $day>{p.day}</TimeCell><LineCell><Dot $day /></LineCell><td colSpan="7" /></Row>
        ) : (
          <Row key={p.time} $flash={p.flash}>
            <TimeCell><a href="#event">{p.time}</a></TimeCell>
            <LineCell><Dot /></LineCell>
            <td />
            <td><Dotted href="#host">DDDD</Dotted></td>
            <ProblemCell $sev={p.sev}><Dotted href="#problem">{p.name}</Dotted></ProblemCell>
            <td><Dotted href="#duration">{p.duration}</Dotted></td>
            <td><AckLink href="#ack">No</AckLink></td>
            <td>
              <ActionsButton>
                1
                <svg width="22" height="8" viewBox="0 0 22 8" fill="#768d99"><circle cx="4.500" cy="4" r="3.400" /><path d="M10 2.800h6V.3L21 4l-5 3.700V5.200h-6z" /></svg>
              </ActionsButton>
            </td>
            <td />
          </Row>
        ))}
      </tbody>
    </Table>
  </Widget>
);

const SystemInfo = () => (
  <Widget $col="18 / span 7" $row="1">
    <WidgetHead><WidgetTitle>System information</WidgetTitle></WidgetHead>
    <ScrollArea>
      <ScrollContent>
        <Table>
          <Cols widths={[268, 71, 0]} />
          <thead><tr><th>Parameter</th><th>Value</th><th>Details</th></tr></thead>
          <tbody>
            {sysInfo.map((r, i) => <tr key={i}><td>{r[0]}</td><td>{r[1]}</td><td>{r[2]}</td></tr>)}
          </tbody>
        </Table>
      </ScrollContent>
      <InnerTrack><InnerThumb /></InnerTrack>
    </ScrollArea>
  </Widget>
);

const TileWidget = ({ title, col, tiles, linked }) => (
  <Widget $col={col} $row="2">
    <WidgetHead><WidgetTitle>{title}</WidgetTitle></WidgetHead>
    <Tiles>
      {tiles.map(([tone, n, label]) => (
        <Tile key={label} $tone={tone}>
          <TileCount>{linked && n > 0 ? <Dotted href="#count">{n}</Dotted> : n}</TileCount>
          <TileLabel $wrap={linked && tone === "none"}>{label}</TileLabel>
        </Tile>
      ))}
    </Tiles>
  </Widget>
);

const TopHosts = () => (
  <Widget $col="1 / span 8" $row="3 / span 2">
    <WidgetHead><WidgetTitle>Top hosts by CPU utilization</WidgetTitle></WidgetHead>
    <HostsTable $width="552px" $rowHeight={41}>
      <Cols widths={[110, 85, 84, 61, 62, 69, 81]} />
      <thead>
        <tr><th /><th>Utilization</th><th /><th>1m avg</th><th>5m avg</th><th>15m avg</th><th>Processes</th></tr>
      </thead>
      <tbody>
        <tr>
          <td><Dotted href="#server">Zabbix server</Dotted></td>
          <td><Gauge>{gaugeColors.map((c, i) => <GaugeBar key={i} $c={c} />)}</Gauge></td>
          <td>2.2534 %</td><td>0.19</td><td>0.2</td><td>0.18</td><td>247</td>
        </tr>
      </tbody>
    </HostsTable>
  </Widget>
);

const Geomap = () => (
  <Widget $col="9 / span 9" $row="3 / span 2">
    <WidgetHead><WidgetTitle>Geomap</WidgetTitle></WidgetHead>
    <MapArea>
      <MapDrawing />
      <MapControl $top={13}>
        <MapButton aria-label="Zoom in"><svg width="16" height="16" stroke="#000" strokeWidth="2.400"><path d="M8 0v16M0 8h16" /></svg></MapButton>
        <MapButton aria-label="Zoom out"><svg width="16" height="16" stroke="#000" strokeWidth="2.400"><path d="M0 8h16" /></svg></MapButton>
      </MapControl>
      <MapControl $top={107}>
        <MapButton aria-label="Home view"><svg width="20" height="18" viewBox="0 0 20 18" fill="#768d99"><path d="M10 0L0 9.500h3V18h5v-6h4v6h5V9.500h3z" /></svg></MapButton>
      </MapControl>
      <MapControl $top={13} $right>
        <MapButton aria-label="Filter"><svg width="18" height="18" viewBox="0 0 18 18" fill="none" stroke="#000" strokeWidth="1.700"><path d="M1 1h16l-5.200 6.500V17L7.200 15.500v-8z" /></svg></MapButton>
      </MapControl>
    </MapArea>
  </Widget>
);

const ActionLog = () => (
  <ActionsPopup role="dialog" aria-label="Actions">
    <PopupTable>
      <Cols widths={[158, 206, 54, 147, 55, 0]} />
      <thead><tr><th>Time</th><th>User/Recipient</th><th>Action</th><th>Message/Command</th><th>Status</th><th>Info</th></tr></thead>
      <tbody>
        <tr>
          <td>2022-09-07 23:41:17</td><td>Admin (Zabbix Administrator)</td>
          <td>
            <svg width="21" height="24" viewBox="-1 0 21 24"><rect y="4" width="20" height="16" rx="1" fill="#768d99" /><path d="M.5 5l9.500 8.500L19.500 5M.5 19.500L7 12M19.500 19.500L13 12" fill="none" stroke="#fff" strokeWidth="1.500" /></svg>
          </td>
          <td>Email</td><td><Tint $c={G}>Sent</Tint></td><td />
        </tr>
        <tr>
          <td>2022-09-07 23:41:16</td><td />
          <td>
            <svg width="21" height="24" viewBox="-1 0 21 24" fill="none" stroke="#768d99"><rect x="1" y="5" width="18" height="17" strokeWidth="2.200" /><path d="M4 2v4M8 2v4M12 2v4M16 2v4M10 9v6M10 17v2.500" strokeWidth="2" /></svg>
          </td>
          <td /><td /><td />
        </tr>
      </tbody>
    </PopupTable>
    <PopupClose aria-label="Close"><Cross size={11} color="#768d99" w={2.4} /></PopupClose>
  </ActionsPopup>
);

const MailToast = () => (
  <Toast>
    <ToastHead>
      <span>1930188289@qq.com</span>
      <button aria-label="Dismiss"><Cross size={12} color="#2f77b8" w={2.6} /></button>
    </ToastHead>
    <ToastBody>
      <svg width="51" height="40" viewBox="0 0 51 40">
        <defs><linearGradient id="env" x1="0" y1="0" x2="0" y2="1"><stop offset="0" stopColor="#fdfeff" /><stop offset="1" stopColor="#c9d6e6" /></linearGradient></defs>
        <rect x="1" y="1" width="49" height="37" rx="2" fill="url(#env)" stroke="#93a5c2" strokeWidth="1.400" />
        <path d="M2 37l18-17M49 37L31 20" stroke="#fff" strokeWidth="2.500" />
        <path d="M2 2l21 21c2 2 3.500 2 5.500 0L49 2z" fill="#e0edfa" stroke="#aebfd6" />
        <path d="M10 6l14 14c1.500 1.300 2 1.300 3.500 0L41 6z" fill="#c2dcf6" opacity=".7" />
      </svg>
      <ToastText>
        <ToastSubject>Problem: 寄！</ToastSubject>
        <Sender><b>mhsdjfyl</b>&lt;mhsdjfyl@126.com&gt;</Sender>
        <p>Problem started at 23:41:16 on<br />2022.09.07Problem name: 寄！ Host:...</p>
      </ToastText>
    </ToastBody>
    <ToastRule />
    <ToastFoot>
      <DeleteMail>删除邮件</DeleteMail>
      <button aria-label="Previous"><svg width="7" height="12" fill="#1565b5"><path d="M7 0v12L0 6z" /></svg></button>
      <span>1/2</span>
      <button aria-label="Next"><svg width="7" height="12" fill="#1565b5"><path d="M0 0v12l7-6z" /></svg></button>
    </ToastFoot>
  </Toast>
);

export default function App() {
  return (
    <Window>
      <GlobalStyle />
      <Browser />
      <Page>
        <Side />
        <Main>
          <PageHeader>
            <Title>Global view</Title>
            <HelpLink href="#help">?</HelpLink>
            <BlueButton>Edit dashboard</BlueButton>
            <BlueButton $icon aria-label="Actions menu">
              <svg width="18" height="16" stroke="#fff" strokeWidth="2.400"><path d="M0 1.500h18M0 8h18M0 14.500h18" /></svg>
            </BlueButton>
            <BlueButton $icon aria-label="Kiosk mode">
              <svg width="18" height="18" viewBox="0 0 18 18" fill="#fff">
                <path d="M0 0h7L4.800 2.200 8 5.500 5.500 8 2.200 4.800 0 7zM18 0v7l-2.200-2.200L12.500 8 10 5.500l3.200-3.300L11 0zM0 18v-7l2.200 2.200L5.500 10 8 12.500l-3.200 3.300L7 18zM18 18h-7l2.200-2.200L10 12.500l2.500-2.500 3.300 3.200L18 11z" />
              </svg>
            </BlueButton>
          </PageHeader>
          <Crumbs>
            <a href="#all">All dashboards</a><Slash>/</Slash><CurrentCrumb href="#global">Global view</CurrentCrumb>
          </Crumbs>
          <Grid>
            <Problems />
            <SystemInfo />
            <TileWidget title="Host availability" col="1 / span 7" tiles={hostTiles} />
            <TileWidget title="Problems by severity" col="8 / span 10" tiles={severityTiles} linked />
            <Widget $col="18 / span 7" $row="2 / span 2">
              <Clock><ClockTime>23:41</ClockTime><ClockZone>Shanghai</ClockZone></Clock>
            </Widget>
            <TopHosts />
            <Geomap />
            <Widget $col="18 / span 4" $row="4">
              <PeekArea><svg width="12" height="40"><path d="M6 0L2 40" stroke="#a5d0f0" strokeWidth="3" /></svg></PeekArea>
            </Widget>
            <Widget $col="22 / span 3" $row="4">
              <PeekArea $align="space-between">
                <svg width="80" height="40" viewBox="0 0 80 40"><circle cx="34" cy="20" r="19" fill="#1f2c33" /></svg>
                <svg width="6" height="40" fill="#e45959"><rect width="6" height="40" /></svg>
              </PeekArea>
            </Widget>
          </Grid>
          <ActionLog />
        </Main>
        <Scrollbar>
          <ScrollArrow aria-label="Scroll up"><svg width="10" height="6" fill="#a3a3a3"><path d="M5 0l5 6H0z" /></svg></ScrollArrow>
          <ScrollThumb />
          <ScrollRest />
          <ScrollArrow aria-label="Scroll down"><svg width="10" height="6" fill="#505050"><path d="M5 6L0 0h10z" /></svg></ScrollArrow>
        </Scrollbar>
      </Page>
      <BottomEdge />
      <MailToast />
      <Watermark>CSDN @Albert_OS</Watermark>
    </Window>
  );
}
